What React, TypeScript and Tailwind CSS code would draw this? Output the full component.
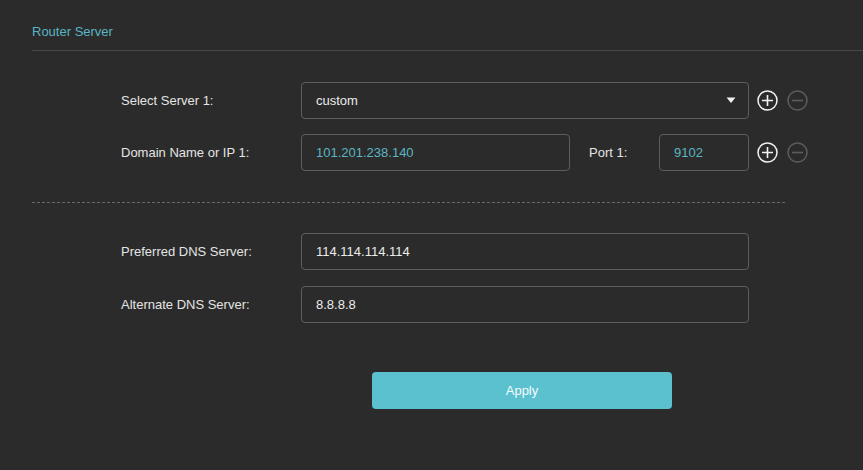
import React from "react";

function PlusIcon() {
  return (
    <svg width="21" height="21" viewBox="0 0 21 21" fill="none">
      <circle cx="10.5" cy="10.5" r="9.5" stroke="#f2f2f2" strokeWidth="1.5" />
      <path d="M10.5 5v11M5 10.5h11" stroke="#f2f2f2" strokeWidth="1.6" />
    </svg>
  );
}

function MinusIcon() {
  return (
    <svg width="21" height="21" viewBox="0 0 21 21" fill="none">
      <circle cx="10.5" cy="10.5" r="9.5" stroke="#5c5c5c" strokeWidth="1.5" />
      <path d="M5 10.5h11" stroke="#5c5c5c" strokeWidth="1.6" />
    </svg>
  );
}

function Actions() {
  return (
    <div className="flex items-center gap-[9px] ml-[8px]">
      <PlusIcon />
      <MinusIcon />
    </div>
  );
}

function Field({ value, teal, className }: { value: string; teal?: boolean; className?: string }) {
  return (
    <div
      className={`h-[37px] flex items-center px-[14px] border border-[#5e5e5e] rounded-[4px] ${
        teal ? "text-[#5bb6c3]" : "text-[#ececec]"
      } ${className ?? ""}`}
    >
      {value}
    </div>
  );
}

export default function App() {
  return (
    <div
      className="w-[863px] h-[470px] bg-[#2b2b2b] pl-[32px] text-[13px] text-[#e4e4e4] overflow-hidden"
      style={{ fontFamily: '"Liberation Sans", Arial, sans-serif' }}
    >
      <div className="pt-[23px] pb-[10px] text-[#5ab5c3] leading-[17px]">Router Server</div>
      <div className="h-[1px] bg-[#474747]" />

      <div className="pl-[89px] pt-[31px] flex flex-col gap-[15px]">
        <div className="flex items-center">
          <span className="w-[180px]">Select Server 1:</span>
          <div className="w-[448px] h-[37px] flex items-center justify-between px-[14px] border border-[#5e5e5e] rounded-[4px] text-[#ececec]">
            <span>custom</span>
            <svg width="10" height="7" viewBox="0 0 10 7" className="mr-[-2px]">
              <path d="M0.5 0.5h9L5 6z" fill="#f2f2f2" />
            </svg>
          </div>
          <Actions />
        </div>
        <div className="flex items-center">
          <span className="w-[180px]">Domain Name or IP 1:</span>
          <Field value="101.201.238.140" teal className="w-[269px]" />
          <span className="w-[89px] pl-[19px]">Port 1:</span>
          <Field value="9102" teal className="w-[90px]" />
          <Actions />
        </div>
      </div>

      <div className="mt-[31px] w-[755px] h-[1px] bg-[repeating-linear-gradient(to_right,#6a6a6a_0_3px,transparent_3px_5px)]" />

      <div className="pl-[89px] pt-[30px] flex flex-col gap-[16px]">
        <div className="flex items-center">
          <span className="w-[180px]">Preferred DNS Server:</span>
          <Field value="114.114.114.114" className="w-[448px]" />
        </div>
        <div className="flex items-center">
          <span className="w-[180px]">Alternate DNS Server:</span>
          <Field value="8.8.8.8" className="w-[448px]" />
        </div>
        <div className="pl-[251px] pt-[33px]">
          <button className="w-[300px] h-[37px] rounded-[4px] bg-[#5bc1cf] text-[#f4fbfc] text-[13px]">
            Apply
          </button>
        </div>
      </div>
    </div>
  );
}
